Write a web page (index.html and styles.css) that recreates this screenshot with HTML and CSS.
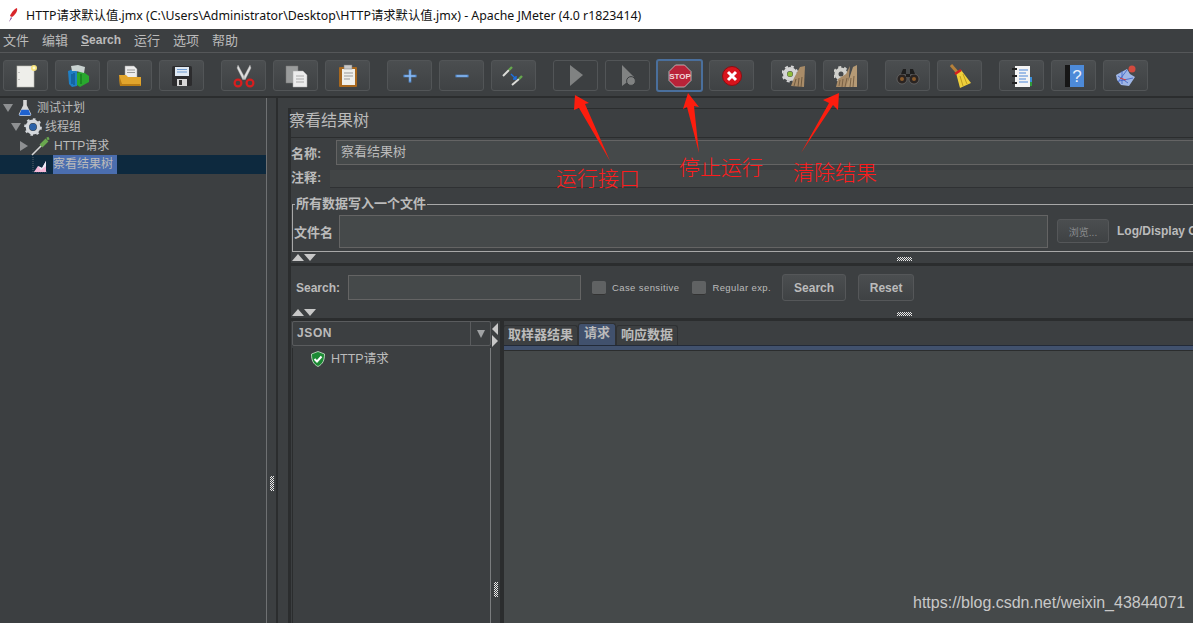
FILE: index.html
```html
<!DOCTYPE html>
<html lang="en">
<head>
    <meta charset="UTF-8">
    <meta name="viewport" content="width=device-width, initial-scale=1.0">
    <title>Apache JMeter</title>
    <link rel="stylesheet" href="styles.css">
</head>
<body>
<div class="window">
    <div class="titlebar">
        <svg class="feather" viewBox="0 0 12 16" width="12" height="16"><path d="M10 1 C11 4 8 8 5 10 L3 9 C4 6 7 2 10 1Z" fill="#d8262c"/><path d="M4 10 L5 11 L2 15 Z" fill="#7a3a90"/></svg>
        <span>HTTP请求默认值.jmx (C:\Users\Administrator\Desktop\HTTP请求默认值.jmx) - Apache JMeter (4.0 r1823414)</span>
    </div>

    <div class="menubar">
        <span>文件</span><span>编辑</span><span class="menu-bold"><u>S</u>earch</span><span>运行</span><span>选项</span><span>帮助</span>
    </div>

    <div class="toolbar">
        <div class="group">
            <div class="tool"><svg viewBox="0 0 24 24"><rect x="3" y="2" width="17" height="21" fill="#eeeeea" stroke="#bdbdb4" stroke-width=".6"/><circle cx="20" cy="4" r="3" fill="#f6e27a"/><circle cx="20" cy="4" r="1.4" fill="#fffbd0"/><path d="M5 8 V9 M5 15 V16" stroke="#999"/></svg></div>
            <div class="tool"><svg viewBox="0 0 24 24"><path d="M2 7 L8 5 L11 7 V22 L6 23 L3 20Z" fill="#1f7fc4"/><path d="M11 9 L16 7 L23 12 V18 L14 23 L11 21Z" fill="#29a82e"/><path d="M5 2 L12 1 L19 3 L18 9 L10 7 L6 7Z" fill="#c9d2d0"/><path d="M6 10 V20 M8 9 V21" stroke="#0d4c80" stroke-width="1"/><path d="M15 10 V20" stroke="#0f6a18"/></svg></div>
            <div class="tool"><svg viewBox="0 0 24 24"><path d="M7 2 H16 L19 5 V14 H7Z" fill="#ececec" stroke="#999" stroke-width=".5"/><path d="M9 6 H17 M9 8.500 H17" stroke="#999"/><path d="M1 11 H8 L10 13 H23 V22 H2Z" fill="#e2a52c"/><path d="M1 11 L2 22 H23 L22 20 H4Z" fill="#b97c14"/></svg></div>
            <div class="tool"><svg viewBox="0 0 24 24"><rect x="2" y="2" width="20" height="20" rx="1.500" fill="#2c2c2e"/><rect x="5" y="3" width="14" height="9" fill="#dfe8f2"/><path d="M7 5.500 H17 M7 8 H17" stroke="#6f9bd0"/><rect x="7" y="15" width="10" height="7" fill="#d8d8d8"/><rect x="9" y="16" width="3" height="5" fill="#333"/></svg></div>
        </div>
        <div class="group">
            <div class="tool"><svg viewBox="0 0 24 24"><path d="M6 1 L13 14 L11 16 L5 4Z M18 1 L19 4 L13 16 L11 14Z" fill="#dedede" stroke="#999" stroke-width=".4"/><circle cx="6" cy="19" r="3.400" fill="none" stroke="#d81e1e" stroke-width="2.200"/><circle cx="18" cy="19" r="3.400" fill="none" stroke="#d81e1e" stroke-width="2.200"/></svg></div>
            <div class="tool"><svg viewBox="0 0 24 24"><path d="M2 2 H14 V19 H2Z" fill="#9a9c9c" stroke="#777" stroke-width=".5"/><path d="M9 7 H19 L23 11 V23 H9Z" fill="#ececec" stroke="#aaa" stroke-width=".5"/><path d="M12 12 H20 M12 15 H20 M12 18 H20" stroke="#aaa"/></svg></div>
            <div class="tool"><svg viewBox="0 0 24 24"><rect x="3" y="3" width="18" height="20" rx="1" fill="#a8681e"/><rect x="6" y="5" width="13" height="16" fill="#f0f0ec"/><rect x="8" y="1" width="8" height="4" fill="#c9c9c9" stroke="#777" stroke-width=".5"/><path d="M8 9 H17 M8 12 H17 M8 15 H14" stroke="#999"/></svg></div>
        </div>
        <div class="group">
            <div class="tool"><svg viewBox="0 0 24 24"><path d="M12 5.500 V18.500 M5.500 12 H18.500" stroke="#5b94da" stroke-width="2.600"/><path d="M12 7 V17 M7 12 H17" stroke="#a8cdf5" stroke-width=".8"/></svg></div>
            <div class="tool"><svg viewBox="0 0 24 24"><path d="M5.500 12 H18.500" stroke="#5b94da" stroke-width="2.600"/><path d="M7 12 H17" stroke="#a8cdf5" stroke-width=".8"/></svg></div>
            <div class="tool"><svg viewBox="0 0 24 24"><path d="M1 12 L7 6" stroke="#dcdcd8" stroke-width="2"/><path d="M7 6 L10 3" stroke="#66a84e" stroke-width="2.400"/><path d="M10 21 L17 15" stroke="#dcdcd8" stroke-width="2"/><path d="M17 15 L20 12" stroke="#66a84e" stroke-width="2.400"/><path d="M9 10 L14 15 M14 12 V15 H11" stroke="#1c6fe0" stroke-width="1.400" fill="none"/></svg></div>
        </div>
        <div class="group group-run">
            <div class="tool tool-off"><svg viewBox="0 0 24 24"><path d="M6 1 L19 11 L6 22Z" fill="#808282"/></svg></div>
            <div class="tool tool-off"><svg viewBox="0 0 24 24"><path d="M6 1 L18 13 L6 22Z" fill="#808282"/><circle cx="15" cy="17" r="4.400" fill="#808282" stroke="#3c3f41"/></svg></div>
            <div class="tool tool-on"><svg viewBox="0 0 24 24"><path d="M7.500 1 H16.500 L23 7.500 V16.500 L16.500 23 H7.500 L1 16.500 V7.500Z" fill="#b92338" stroke="#ccc" stroke-width=".8"/><text x="12" y="15" class="stop-text">STOP</text></svg></div>
            <div class="tool"><svg viewBox="0 0 24 24"><circle cx="12" cy="12" r="9.500" fill="#d8141c" stroke="#8c0d12"/><path d="M8 8 L16 16 M16 8 L8 16" stroke="#fff" stroke-width="3"/></svg></div>
        </div>
        <div class="group">
            <div class="tool"><svg viewBox="0 0 24 24"><circle cx="8" cy="10" r="5" fill="none" stroke="#d5d5d5" stroke-width="4"/><circle cx="8" cy="10" r="7.500" fill="none" stroke="#d5d5d5" stroke-width="2" stroke-dasharray="3 3"/><circle cx="8" cy="10" r="2.600" fill="#8fbc3c"/><path d="M23 2 L18 3 L12 14 L9 22 L22 23Z" fill="#a98c68"/><path d="M14 15 L12 22 M17 14 L16 23 M20 13 L19 23" stroke="#6f5a40"/></svg></div>
            <div class="tool"><svg viewBox="0 0 24 24"><circle cx="7" cy="10" r="4.500" fill="none" stroke="#d0d0cc" stroke-width="4"/><circle cx="7" cy="10" r="7" fill="none" stroke="#d0d0cc" stroke-width="2" stroke-dasharray="3 3"/><path d="M16 2 L12 10 L4 15 L2 23 H14Z" fill="#a98c68"/><path d="M23 1 L19 3 L16 12 L12 23 H23Z" fill="#b59a75"/><path d="M6 16 L5 22 M9 15 L8 23 M13 14 L11 23 M17 14 L16 23 M20 12 L19 23" stroke="#7a6246"/></svg></div>
        </div>
        <div class="group">
            <div class="tool"><svg viewBox="0 0 24 24"><circle cx="6" cy="15" r="5" fill="#2a2422" stroke="#777" stroke-width=".6"/><circle cx="18" cy="15" r="5" fill="#2a2422" stroke="#777" stroke-width=".6"/><circle cx="6" cy="15" r="2" fill="#8a5a2a"/><circle cx="18" cy="15" r="2" fill="#8a5a2a"/><path d="M5 10 L7 5 H10 V13 H14 V5 H17 L19 10" fill="#1e1e1e"/></svg></div>
            <div class="tool"><svg viewBox="0 0 24 24"><path d="M3 1 L9 8" stroke="#b5803a" stroke-width="3"/><path d="M8 9 L13 6 L23 19 L12 24 Z" fill="#efcf3a"/><path d="M7 10 L13 6" stroke="#d81e1e" stroke-width="2.400"/><path d="M12 12 L15 22 M15 10 L19 20" stroke="#bf9d1e"/></svg></div>
        </div>
        <div class="group">
            <div class="tool"><svg viewBox="0 0 24 24"><rect x="5" y="2" width="15" height="21" fill="#f4f4f4"/><rect x="20" y="13" width="2" height="5" fill="#3a8fd8"/><rect x="20" y="18" width="2" height="4" fill="#2f9a3a"/><path d="M2 5 H7 M2 12 H7 M2 19 H7" stroke="#222" stroke-width="2"/><path d="M9 6 H18 M9 9 H16 M9 12 H18 M9 15 H16 M9 18 H18" stroke="#4a86d8"/></svg></div>
            <div class="tool"><svg viewBox="0 0 24 24"><rect x="4" y="1" width="18" height="22" fill="#4d8ad8"/><rect x="3" y="1" width="5" height="22" fill="#161616"/><text x="15" y="18" class="help-text">?</text></svg></div>
            <div class="tool"><svg viewBox="0 0 24 24"><path d="M2 11 L13 5 L16 10 L21 13 L15 22 L7 21 L3 16Z" fill="#9fb6e6"/><path d="M4 12 L14 19 M8 7 L8 20 M13 6 L4 18 M5 17 L19 14" stroke="#3a60c4" stroke-width=".8"/><path d="M6 14 L12 16" stroke="#d84040"/><circle cx="18" cy="5" r="3.500" fill="#d24a3e"/></svg></div>
        </div>
    </div>

    <div class="main">
        <div class="tree">
            <div class="row row-1">
                <span class="caret-down"></span>
                <svg class="node" viewBox="0 0 18 20"><path d="M7 1 H11 V7 L16 17 Q16 19 14 19 H4 Q2 19 2 17 L7 7Z" fill="#d8d8d8"/><path d="M5 12 H13 L15.500 18 H2.500Z" fill="#1f62d0"/></svg>
                <span class="row-text">测试计划</span>
            </div>
            <div class="row row-2">
                <span class="caret-down"></span>
                <svg class="node" viewBox="-1.500 -1.500 23 23"><circle cx="10" cy="10" r="6.500" fill="none" stroke="#d5d8dc" stroke-width="4"/><circle cx="10" cy="10" r="9" fill="none" stroke="#d5d8dc" stroke-width="2.400" stroke-dasharray="3 4"/><circle cx="10" cy="10" r="4" fill="#2c62a8"/></svg>
                <span class="row-text">线程组</span>
            </div>
            <div class="row row-3">
                <span class="caret-right"></span>
                <svg class="node" viewBox="0 0 20 20"><path d="M1 19 L11 9" stroke="#d5d5d5" stroke-width="1.600"/><path d="M10 10 L16 4" stroke="#6aa84f" stroke-width="4"/><path d="M16 3 L18 2" stroke="#6aa84f" stroke-width="3"/></svg>
                <span class="row-text">HTTP请求</span>
            </div>
            <div class="row row-4 selected">
                <svg class="node" viewBox="0 0 17 16"><path d="M1 0 V15 H16" fill="none" stroke="#8a8a8a" stroke-width=".6" stroke-dasharray="1 1"/><path d="M2 15 L6 9 L10 11 L14 4 V15Z" fill="#f4b8d8"/><path d="M6 9 L10 11 L14 4 V9 L9 13Z" fill="#e8eef8"/></svg>
                <span class="row-text highlight">察看结果树</span>
            </div>
        </div>

        <div class="divider"><div class="grip-v"></div></div>

        <div class="content">
            <div class="panel">
                <div class="panel-title">察看结果树</div>
                <div class="name-row">
                    <label class="label-name">名称:</label>
                    <div class="field name-field">察看结果树</div>
                </div>
                <div class="comment-row">
                    <label>注释:</label>
                    <div class="comment-field"></div>
                </div>

                <fieldset class="file-box">
                    <legend>所有数据写入一个文件</legend>
                    <label>文件名</label>
                    <div class="field file-field"></div>
                    <div class="btn btn-dim">浏览...</div>
                    <span class="log-label">Log/Display Only:</span>
                </fieldset>

                <div class="split-h">
                    <span class="up"></span><span class="down"></span>
                    <div class="grip-h"></div>
                </div>

                <div class="search-row">
                    <label>Search:</label>
                    <div class="field search-field"></div>
                    <span class="check"></span><span class="check-label">Case sensitive</span>
                    <span class="check check-2"></span><span class="check-label">Regular exp.</span>
                    <div class="btn btn-search">Search</div>
                    <div class="btn btn-reset">Reset</div>
                </div>

                <div class="split-h split-2">
                    <span class="up"></span><span class="down"></span>
                    <div class="grip-h"></div>
                </div>

                <div class="results">
                    <div class="results-left">
                        <div class="combo">
                            <span class="combo-text">JSON</span>
                            <span class="combo-arrow"></span>
                        </div>
                        <div class="result-tree">
                            <svg class="shield" viewBox="0 0 16 16"><path d="M8 0.500 L14.500 3 C14.500 9 13 13 8 15.500 C3 13 1.500 9 1.500 3Z" fill="#1c8a34" stroke="#cfe8d0" stroke-width=".8"/><path d="M4.500 8 L7 10.500 L11.500 5.500" fill="none" stroke="#fff" stroke-width="2"/></svg>
                            <span>HTTP请求</span>
                        </div>
                    </div>
                    <div class="split-v">
                        <span class="left"></span><span class="right"></span>
                        <div class="grip-v"></div>
                    </div>
                    <div class="results-right">
                        <div class="tabs">
                            <span class="tab">取样器结果</span>
                            <span class="tab tab-active">请求</span>
                            <span class="tab">响应数据</span>
                        </div>
                        <div class="tab-line"></div>
                        <div class="tab-body"></div>
                    </div>
                </div>
            </div>
        </div>
    </div>

    <!-- annotations drawn over the screenshot -->
    <svg class="arrows" viewBox="0 0 1193 623" width="1193" height="623">
        <path d="M575 95 L589 103 L585 104 L610 161 L579 108 L574 110Z"/>
        <path d="M688 93 L699 107 L694 106 L699 153 L687 107 L683 109Z"/>
        <path d="M839 93 L838 110 L833 105 L801 153 L829 103 L823 100Z"/>
    </svg>
    <span class="note note-1">运行接口</span>
    <span class="note note-2">停止运行</span>
    <span class="note note-3">清除结果</span>
    <span class="watermark">https://blog.csdn.net/weixin_43844071</span>
</div>
</body>
</html>
```

FILE: styles.css
```css
* {
    box-sizing: border-box;
}

body {
    margin: 0;
    background: #3c3f41;
    overflow: hidden;
    font-family: "Liberation Sans", "Noto Sans CJK SC", sans-serif;
}

svg {
    display: block;
}

.window {
    position: relative;
    width: 1193px;
    height: 623px;
    overflow: hidden;
    background: #3c3f41;
    color: #bbbbbb;
    white-space: nowrap;
}

.titlebar {
    height: 29px;
    background: #fff;
    color: #111;
    display: flex;
    align-items: center;
    padding-left: 7px;
    font-family: "Noto Sans", "Noto Sans CJK SC", sans-serif;
    font-size: 12.350px;
    gap: 7px;
}

.menubar {
    height: 24px;
    display: flex;
    align-items: center;
    gap: 13px;
    padding: 0 0 2px 3px;
    font-size: 13px;
    border-bottom: 1px solid #555759;
}

.menu-bold {
    font-size: 12px;
    font-weight: bold;
}

.toolbar {
    height: 45px;
    display: flex;
    padding: 7px 0 0 3px;
    gap: 17px;
    border-bottom: 2px solid #2b2d2e;
}

.group {
    display: flex;
    gap: 7px;
}

.tool {
    width: 45px;
    height: 31px;
    border: 1px solid #525557;
    border-radius: 3px;
    background: linear-gradient(#4b4e50, #3f4244);
    display: flex;
    align-items: center;
    justify-content: center;
}

.tool svg {
    width: 24px;
    height: 24px;
}

.tool-off {
    background: #3c3f41;
}

.tool-on {
    margin: -1px -1px;
    width: 47px;
    height: 33px;
    border: 2px solid #4a6f9c;
}

.stop-text {
    fill: #f0d8d8;
    font-size: 8px;
    font-weight: bold;
    text-anchor: middle;
}

.help-text {
    fill: #e8eef8;
    font-size: 17px;
    text-anchor: middle;
}

.main {
    display: flex;
    height: 525px;
}

.tree {
    width: 266px;
    font-size: 12px;
}

.row {
    height: 19px;
    display: flex;
    align-items: center;
}

.row-text {
    line-height: 12px;
}

.node {
    width: 18px;
    height: 18px;
    flex: none;
}

.caret-down {
    border-left: 5px solid transparent;
    border-right: 5px solid transparent;
    border-top: 8px solid #8e9092;
}

.caret-right {
    border-top: 5px solid transparent;
    border-bottom: 5px solid transparent;
    border-left: 8px solid #8e9092;
}

.row-1 {
    padding-left: 3px;
    gap: 3px;
}

.row-2 {
    padding-left: 11px;
    gap: 2px;
}

.row-2 .node {
    width: 20px;
    height: 20px;
}

.row-3 {
    padding-left: 20px;
    gap: 3px;
}

.row-3 .node {
    width: 20px;
    height: 20px;
}

.row-4 {
    padding-left: 32px;
    gap: 4px;
}

.row-4 .node {
    width: 17px;
    height: 16px;
}

.selected {
    background: #0d293e;
}

.highlight {
    background: #4b6eaf;
    height: 19px;
    line-height: 18px;
    padding-right: 4px;
}

.divider {
    position: relative;
    width: 10px;
    border-left: 1px solid #6f7173;
}

.grip-v {
    position: absolute;
    width: 4px;
    height: 15px;
    background: repeating-conic-gradient(#e8e8e8 0 25%, #3c3f41 0 50%) 0 0 / 2px 2px;
}

.divider .grip-v {
    left: 3px;
    top: 378px;
}

.content {
    flex: 1;
    min-width: 0;
    border-left: 2px solid #2b2d2e;
    padding: 10px 0 0 10px;
}

.panel {
    height: 100%;
    margin-right: -6px;
    border-left: 3px solid #2b2d2e;
}

.panel-title {
    height: 30px;
    margin-left: -2px;
    padding-bottom: 9px;
    border-top: 1px solid #2b2d2e;
    border-bottom: 1px solid #2b2d2e;
    display: flex;
    align-items: center;
    font-size: 16px;
    font-family: "Noto Sans CJK SC", sans-serif;
}

.name-row {
    height: 25px;
    margin-top: 2px;
    display: flex;
    align-items: center;
    font-size: 13px;
    font-weight: bold;
}

.label-name {
    width: 45px;
}

.field {
    background: #45494a;
    border: 1px solid #646464;
}

.name-field {
    flex: 1;
    height: 25px;
    line-height: 21px;
    padding-left: 4px;
    font-weight: normal;
    font-size: 13px;
}

.comment-row {
    height: 18px;
    margin-top: 5px;
    display: flex;
    align-items: center;
    font-size: 13px;
    font-weight: bold;
}

.comment-row label {
    width: 39px;
    line-height: 16px;
    padding-bottom: 2px;
}

.comment-field {
    flex: 1;
    height: 18px;
    background: #424546;
    border-bottom: 1px solid #2f3133;
}

.file-box {
    margin: 7px 0 0 1px;
    padding: 0 0 2px 1px;
    height: 57px;
    border: 1px solid #a8a8a8;
    border-right: none;
    display: flex;
    align-items: center;
    font-size: 13px;
}

.file-box legend {
    margin-left: 1px;
    padding: 0 1px;
    line-height: 18px;
    font-weight: bold;
}

.file-box label {
    width: 45px;
    font-weight: bold;
}

.file-field {
    width: 709px;
    height: 33px;
    flex: none;
}

.btn {
    height: 27px;
    border: 1px solid #555759;
    border-radius: 3px;
    background: linear-gradient(#4b4e50, #3f4244);
    display: flex;
    align-items: center;
    justify-content: center;
    font-size: 12px;
    font-weight: bold;
}

.btn-dim {
    margin-left: 9px;
    height: 24px;
    width: 52px;
    color: #8a8c8e;
    font-size: 10px;
    font-weight: normal;
}

.log-label {
    margin-left: 8px;
    font-size: 12px;
    font-weight: bold;
}

.split-h {
    position: relative;
    height: 14px;
    display: flex;
    padding: 2px 0 0 1px;
    border-bottom: 3px solid #2b2d2e;
}

.up {
    width: 0;
    height: 0;
    border-left: 6px solid transparent;
    border-right: 6px solid transparent;
    border-bottom: 7px solid #c8c8c8;
}

.down {
    width: 0;
    height: 0;
    border-left: 6px solid transparent;
    border-right: 6px solid transparent;
    border-top: 7px solid #c8c8c8;
}

.grip-h {
    position: absolute;
    left: 606px;
    top: 5px;
    width: 15px;
    height: 4px;
    background: repeating-conic-gradient(#e8e8e8 0 25%, #3c3f41 0 50%) 0 0 / 2px 2px;
}

.search-row {
    height: 43px;
    display: flex;
    align-items: center;
    padding-left: 5px;
    font-size: 12px;
}

.search-row label {
    width: 52px;
    font-weight: bold;
}

.search-field {
    width: 233px;
    height: 25px;
}

.check {
    width: 14px;
    height: 14px;
    margin-left: 11px;
    background: #606263;
    border-bottom: 1px solid #333;
    border-radius: 2px;
}

.check-2 {
    margin-left: 13px;
}

.check-label {
    margin-left: 6px;
    font-size: 9.500px;
    letter-spacing: .4px;
}

.search-row .btn-search {
    width: 64px;
    margin-left: 11px;
}

.search-row .btn-reset {
    width: 56px;
    margin-left: 12px;
}

.split-2 {
    height: 12px;
    padding-top: 0;
}

.split-2 .grip-h {
    top: 3px;
}

.results {
    display: flex;
    height: 305px;
}

.results-left {
    width: 200px;
    flex: none;
    padding-left: 1px;
}

.combo {
    height: 25px;
    display: flex;
    align-items: center;
    border: 1px solid #5a5c5e;
    border-radius: 2px;
    font-size: 12px;
    font-weight: bold;
    letter-spacing: .6px;
}

.combo-text {
    flex: 1;
    padding-left: 4px;
    height: 23px;
    line-height: 23px;
    border-right: 1px solid #5a5c5e;
}

.combo-arrow {
    margin: 0 5px 0 6px;
    border-left: 4px solid transparent;
    border-right: 4px solid transparent;
    border-top: 8px solid #a0a2a4;
}

.result-tree {
    height: 277px;
    margin-top: 2px;
    border-right: 1px solid #7a7c7e;
    border-left: 1px solid #2b2d2e;
    display: flex;
    padding: 3px 0 0 17px;
    gap: 5px;
    font-size: 12.500px;
}

.result-tree span {
    line-height: 16px;
    height: 16px;
}

.shield {
    width: 16px;
    height: 16px;
}

.split-v {
    position: relative;
    width: 13px;
    flex: none;
    display: flex;
    flex-direction: column;
    border-right: 4px solid #2b2d2e;
    padding-top: 2px;
}

.left {
    width: 0;
    height: 0;
    margin-left: 1px;
    border-top: 6px solid transparent;
    border-bottom: 6px solid transparent;
    border-right: 6px solid #c8c8c8;
}

.right {
    width: 0;
    height: 0;
    margin-left: 1px;
    border-top: 6px solid transparent;
    border-bottom: 6px solid transparent;
    border-left: 6px solid #c8c8c8;
}

.split-v .grip-v {
    left: 3px;
    top: 261px;
}

.results-right {
    flex: 1;
    min-width: 0;
}

.tabs {
    height: 24px;
    display: flex;
    align-items: flex-end;
    margin-left: -1px;
    font-size: 13px;
    font-weight: bold;
}

.tab {
    height: 20px;
    padding: 0 4px;
    line-height: 18px;
    border: 1px solid #2f3133;
    border-bottom: none;
    border-radius: 3px 3px 0 0;
    background: #3c3f41;
}

.tab-active {
    height: 22px;
    padding: 0 5px;
    line-height: 18px;
    background: #41516d;
}

.tab-line {
    height: 6px;
    border-top: 1px solid #222a38;
    background: #41516d;
    border-bottom: 1px solid #2b2d2e;
}

.tab-body {
    height: 275px;
    background: #45494a;
}

.arrows {
    position: absolute;
    left: 0;
    top: 0;
    pointer-events: none;
    fill: #fd1d0e;
}

.note {
    position: absolute;
    color: #ff1c1c;
    font-family: "Noto Sans CJK SC", sans-serif;
    font-weight: 300;
    font-size: 21px;
    line-height: 26px;
}

.note-1 {
    left: 556px;
    top: 164px;
}

.note-2 {
    left: 679px;
    top: 153px;
}

.note-3 {
    left: 793px;
    top: 158px;
}

.watermark {
    position: absolute;
    left: 913px;
    top: 594px;
    color: #c8c8c8;
    font-size: 16px;
    line-height: 18px;
}
```
